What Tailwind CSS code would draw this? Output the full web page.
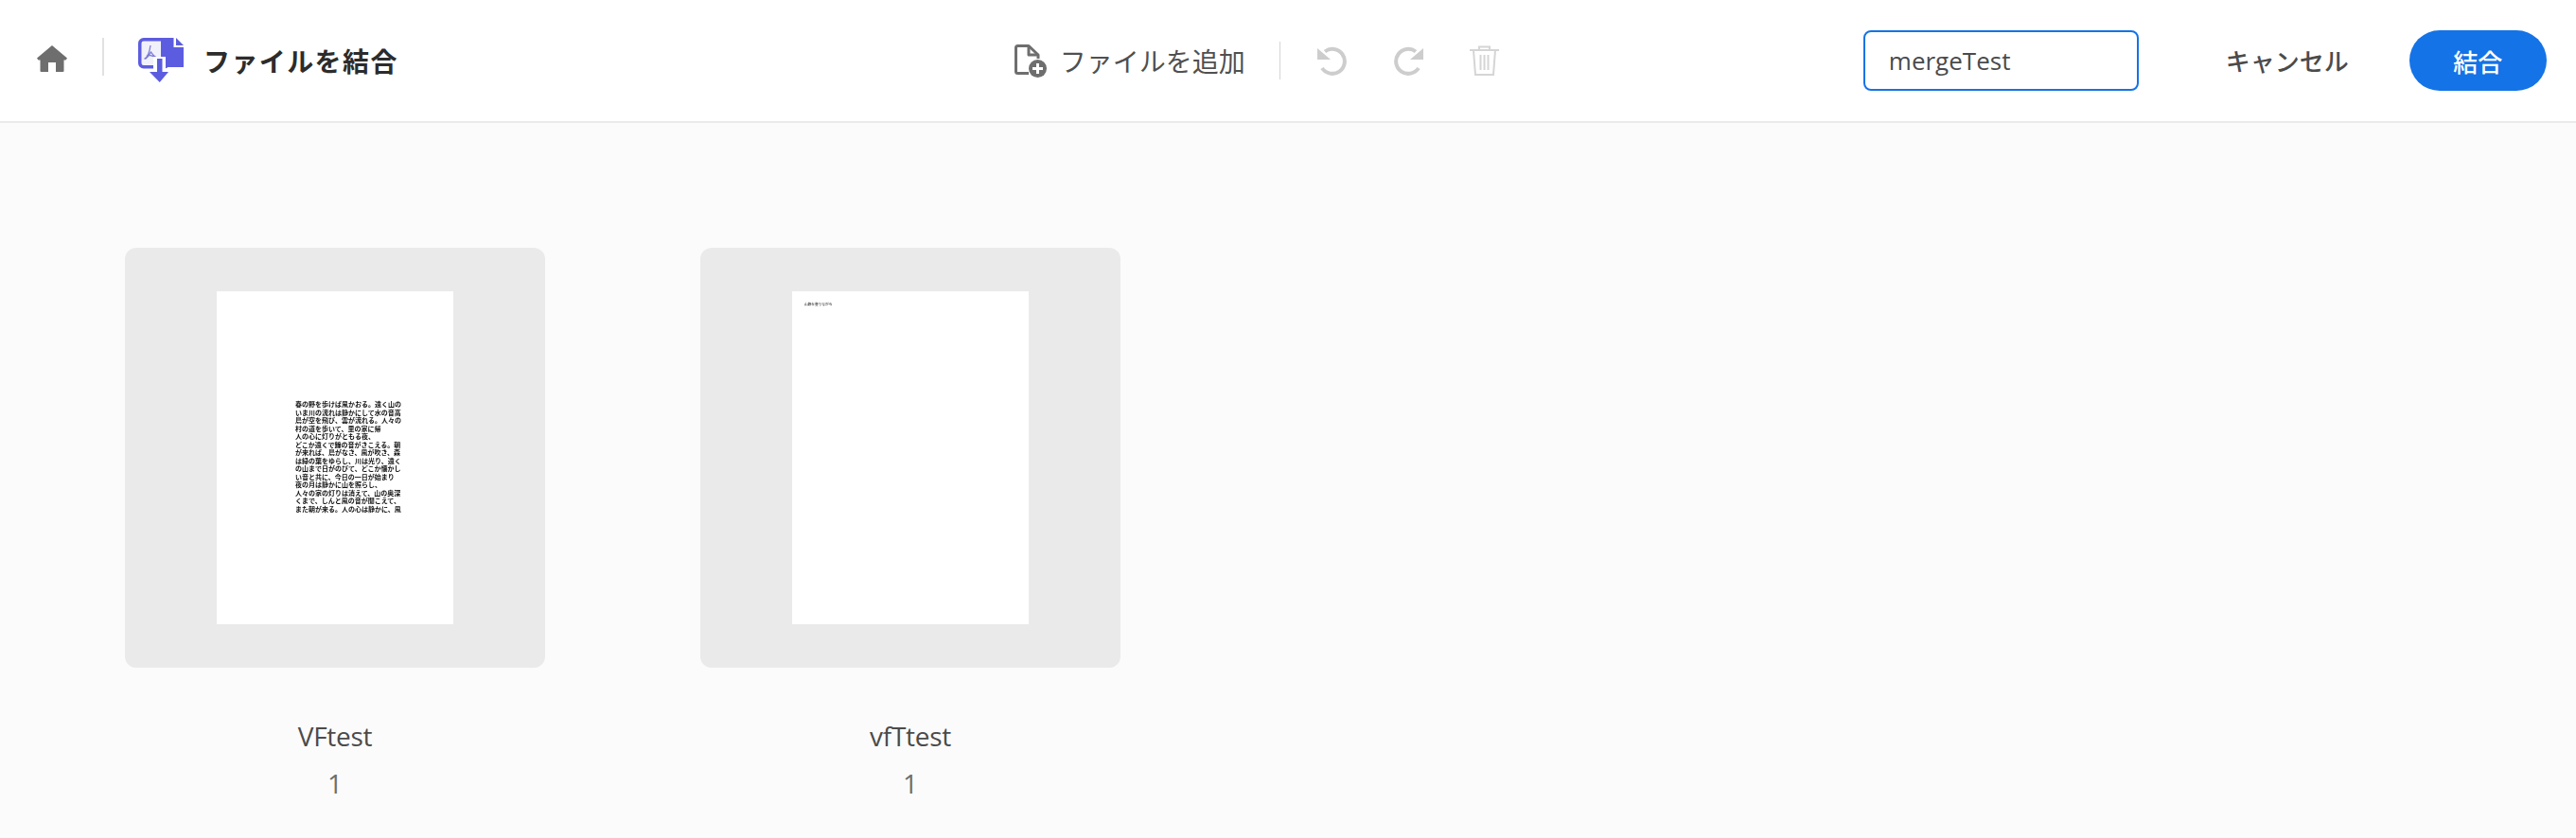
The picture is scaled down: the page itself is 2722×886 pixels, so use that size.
<!DOCTYPE html>
<html lang="ja">
<head>
    <meta charset="UTF-8">
    <title>ファイルを結合</title>
    <script src="https://cdn.jsdelivr.net/npm/@tailwindcss/browser@4"></script>
</head>
<body class="bg-[#fbfbfb] h-[886px] overflow-hidden font-['Open_Sans','Noto_Sans_CJK_JP',sans-serif]">

    <header class="h-[130px] bg-white border-b-2 border-[#eaeaea] flex items-center">
        <!-- left -->
        <svg class="ml-[39px] mt-[-4px] w-[32px] h-[28px]" viewBox="0 0 32 28"><path fill="#6e6e6e" d="M16 0 L32 13.5 L30.5 15.5 H28.5 V27 Q28.5 28 27.5 28 H20 V18 H12 V28 H4.5 Q3.5 28 3.5 27 V15.5 H1.5 L0 13.5 Z"/></svg>
        <div class="ml-[37px] mt-[-8px] w-[2px] h-[40px] bg-[#e1e1e1]"></div>
        <svg class="ml-[36px] mt-[-1px] w-[48px] h-[47px]" viewBox="0 0 48 47">
            <rect x="1.75" y="1.75" width="30" height="29" rx="4" fill="#f1f1fb" stroke="#5c5ce0" stroke-width="3.5"/>
            <path fill="#5c5ce0" d="M24 0 H37.5 V10 H48 V31 H24 Z"/>
            <path fill="#5c5ce0" d="M40 0 L48 8 H40 Z"/>
            <path fill="none" stroke="#7b7bd8" stroke-width="1.3" d="M13 8 C12 15 10 20 7 22 C9 23 12 17 13.5 15 C15 17 17 20 20 21 C17 20 12 17 9 19"/>
            <rect x="16" y="20" width="13" height="16" fill="#fff"/>
            <path fill="#5c5ce0" d="M20 22 H25.5 V36 H32 L22.75 47 L12 36 H20 Z"/>
        </svg>
        <h1 class="ml-[21px] mt-[-1px] text-[28px] leading-none font-bold tracking-[1.4px] text-[#2c2c2c] font-['Noto_Sans_CJK_JP',sans-serif]">ファイルを結合</h1>

        <!-- centre -->
        <svg class="ml-[651px] w-[34px] h-[35px]" viewBox="0 0 34 35">
            <path fill="none" stroke="#6e6e6e" stroke-width="3" stroke-linejoin="round" d="M15 30.5 H3.5 Q1.5 30.5 1.5 28.5 V3.5 Q1.5 1.5 3.5 1.5 H15 L25 11 V15"/>
            <path fill="none" stroke="#6e6e6e" stroke-width="3" stroke-linejoin="round" d="M15 2 V11 H25"/>
            <circle cx="24.5" cy="25.5" r="9.5" fill="#6e6e6e"/>
            <path stroke="#fff" stroke-width="3" d="M24.5 20 V31 M19 25.5 H30"/>
        </svg>
        <span class="ml-[14px] text-[28px] leading-none text-[#505050] font-['Noto_Sans_CJK_JP',sans-serif] font-normal">ファイルを追加</span>
        <div class="ml-[36px] w-[1px] h-[40px] bg-[#d5d5d5]"></div>
        <svg class="ml-[39px] w-[32px] h-[32px]" viewBox="0 0 32 32">
            <path fill="none" stroke="#cdcdcd" stroke-width="4" d="M8 6.5 A13 13 0 1 1 5 24"/>
            <path fill="#cdcdcd" d="M0 3 L14 15 H0 Z"/>
        </svg>
        <svg class="ml-[48px] w-[32px] h-[32px]" viewBox="0 0 32 32">
            <path fill="none" stroke="#cdcdcd" stroke-width="4" d="M24 6.5 A13 13 0 1 0 27 24"/>
            <path fill="#cdcdcd" d="M32 3 L18 15 H32 Z"/>
        </svg>
        <svg class="ml-[49px] w-[31px] h-[32px]" viewBox="0 0 31 32">
            <path fill="none" stroke="#d5d5d5" stroke-width="2" d="M0 5 H31 M10 5 V1.5 H21 V5 M4 5 L6 31 H25 L27 5 M11.5 10 V26 M15.5 10 V26 M19.5 10 V26"/>
        </svg>

        <!-- right -->
        <div class="ml-[385px] w-[291px] h-[64px] border-2 border-[#1473e6] rounded-[8px] flex items-center px-[25px] text-[26px] text-[#4b4b4b]">mergeTest</div>
        <button class="ml-[92px] text-[26px] leading-none font-medium text-[#4b4b4b] font-['Noto_Sans_CJK_JP',sans-serif]">キャンセル</button>
        <button class="ml-[64px] w-[145px] h-[64px] rounded-full bg-[#1473e6] text-white text-[26px] font-medium font-['Noto_Sans_CJK_JP',sans-serif]">結合</button>
    </header>

    <main class="flex gap-[164px] pl-[132px] pt-[132px]">
        <div class="w-[444px] flex flex-col items-center">
            <div class="w-[444px] h-[444px] bg-[#eaeaea] rounded-[12px] flex items-center justify-center">
                <div class="w-[250px] h-[352px] bg-white pt-[115px] pl-[83px]">
                    <div class="w-[96px] text-[7px] leading-[8.5px] whitespace-nowrap font-bold text-[#111] blur-[0.7px] font-['Noto_Sans_CJK_JP',sans-serif]">
                        <div>春の野を歩けば風かおる。遠く山の</div>
                        <div>いま川の流れは静かにして水の音高</div>
                        <div>鳥が空を飛び、雲が流れる。人々の</div>
                        <div>村の道を歩いて、里の家に帰</div>
                        <div>人の心に灯りがともる夜、</div>
                        <div>どこか遠くで鐘の音がきこえる。朝</div>
                        <div>が来れば、鳥がなき、風が吹き、森</div>
                        <div>は緑の葉をゆらし、川は光り、遠く</div>
                        <div>の山まで日がのびて、どこか懐かし</div>
                        <div>い音と共に、今日の一日が始まり</div>
                        <div>夜の月は静かに山を照らし、</div>
                        <div>人々の家の灯りは消えて、山の奥深</div>
                        <div>くまで、しんと風の音が聞こえて、</div>
                        <div>また朝が来る。人の心は静かに、風</div>
                    </div>
                </div>
            </div>
            <p class="mt-[53px] text-[28px] leading-[38px] text-[#4b4b4b] tracking-[-0.3px]">VFtest</p>
            <p class="mt-[12px] text-[28px] leading-[38px] text-[#6e6e6e]">1</p>
        </div>
        <div class="w-[444px] flex flex-col items-center">
            <div class="w-[444px] h-[444px] bg-[#eaeaea] rounded-[12px] flex items-center justify-center">
                <div class="w-[250px] h-[352px] bg-white pt-[11px] pl-[13px]">
                    <div class="text-[3.7px] leading-[5px] whitespace-nowrap font-medium text-[#333] blur-[0.6px] font-['Noto_Sans_CJK_JP',sans-serif]">山路を登りながら</div>
                </div>
            </div>
            <p class="mt-[53px] text-[28px] leading-[38px] text-[#4b4b4b] tracking-[-0.3px]">vfTtest</p>
            <p class="mt-[12px] text-[28px] leading-[38px] text-[#6e6e6e]">1</p>
        </div>
    </main>

</body>
</html>
